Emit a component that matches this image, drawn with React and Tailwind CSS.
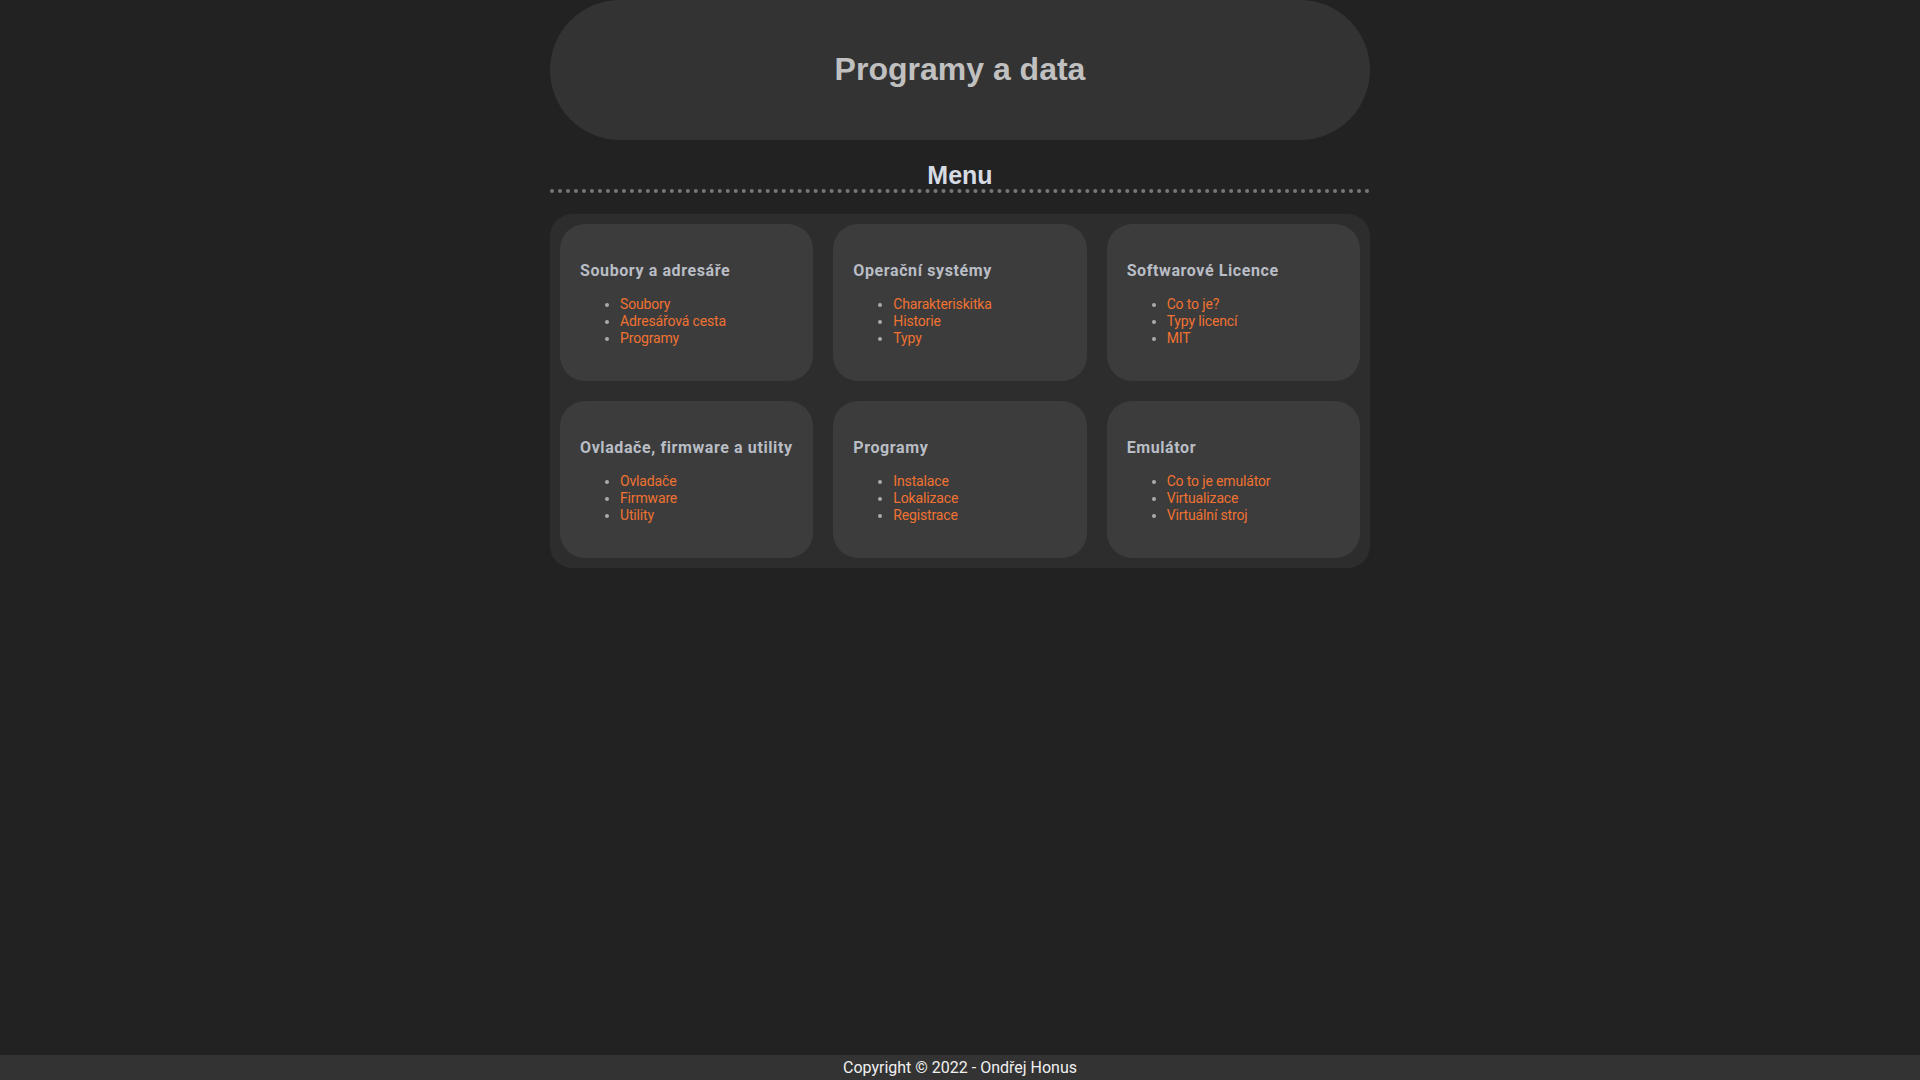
import React from "react";

const cards = [
  { title: "Soubory a adresáře", items: ["Soubory", "Adresářová cesta", "Programy"] },
  { title: "Operační systémy", items: ["Charakteriskitka", "Historie", "Typy"] },
  { title: "Softwarové Licence", items: ["Co to je?", "Typy licencí", "MIT"] },
  { title: "Ovladače, firmware a utility", items: ["Ovladače", "Firmware", "Utility"] },
  { title: "Programy", items: ["Instalace", "Lokalizace", "Registrace"] },
  { title: "Emulátor", items: ["Co to je emulátor", "Virtualizace", "Virtuální stroj"] },
];

export default function App() {
  return (
    <div className="min-h-screen flex flex-col bg-[#222222]" style={{ fontFamily: "Roboto, 'Liberation Sans', sans-serif" }}>
      <main className="w-[820px] mx-auto flex-1">
        <header className="h-[140px] rounded-[70px] bg-[#333333] flex items-center justify-center">
          <h1 className="text-[32px] font-bold text-[#c0c0c0] font-['Liberation_Sans',Arial,sans-serif] leading-none -mt-[2px]">
            Programy a data
          </h1>
        </header>
        <h2 className="mt-[21px] text-center text-[25px] font-bold text-[#d6dbe3] font-['Liberation_Sans',Arial,sans-serif] leading-[28px] border-b-4 border-dotted border-[#777777]">
          Menu
        </h2>
        <section className="mt-[21px] bg-[#2d2d2d] rounded-[22px] p-[10px] grid grid-cols-3 gap-x-[20px] gap-y-[20px]">
          {cards.map((c) => (
            <div key={c.title} className="bg-[#3c3c3c] rounded-[25px] h-[157px] px-[20px] pt-[37px]">
              <h3 className="text-[16px] font-bold tracking-[0.6px] text-[#b9bdc5] leading-[19px] whitespace-nowrap">
                {c.title}
              </h3>
              <ul className="mt-[16px] pl-[40px] list-disc marker:text-[#aaaaaa] text-[#f07232] text-[14px] leading-[17px] tracking-[-0.15px]">
                {c.items.map((i) => (
                  <li key={i}><a href="#" className="text-[#f07232]">{i}</a></li>
                ))}
              </ul>
            </div>
          ))}
        </section>
      </main>
      <footer className="h-[25px] bg-[#333333] flex items-center justify-center text-[16px] text-[#f0f0f0] leading-none">
        Copyright © 2022 - Ondřej Honus
      </footer>
    </div>
  );
}
